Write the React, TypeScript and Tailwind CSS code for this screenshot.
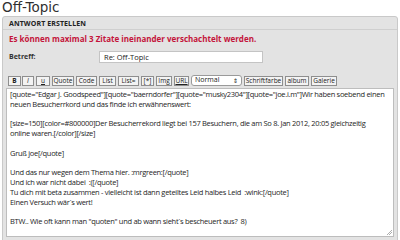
import React from "react";

const lines: string[] = [
  '[quote="Edgar J. Goodspeed"][quote="baerndorfer"][quote="musky2304"][quote="joe.i.m"]Wir haben soebend einen',
  "neuen Besucherrkord und das finde ich erwähnenswert:",
  "",
  "[size=150][color=#800000]Der Besucherrekord liegt bei 157 Besuchern, die am So 8. Jan 2012, 20:05 gleichzeitig",
  "online waren.[/color][/size]",
  "",
  "Gruß joe[/quote]",
  "",
  "Und das nur wegen dem Thema hier. :mrgreen:[/quote]",
  "Und ich war nicht dabei  :([/quote]",
  "Tu dich mit beta zusammen - vielleicht ist dann geteiltes Leid halbes Leid  :wink:[/quote]",
  "Einen Versuch wär´s wert!",
  "",
  "BTW.. Wie oft kann man \"quoten\" und ab wann sieht´s bescheuert aus?  8)",
];

function Btn({ children, className = "" }: { children: React.ReactNode; className?: string }) {
  return (
    <div
      className={
        "h-[10px] border border-[#8e8e8e] bg-[#f3f3f3] text-[6.5px] leading-[8px] text-[#222] flex items-center justify-center shrink-0 " +
        className
      }
    >
      {children}
    </div>
  );
}

export default function App() {
  return (
    <div className="w-[400px] h-[240px] bg-white overflow-hidden font-['Open_Sans',sans-serif] text-[#333]">
      <div className="h-[15px] pl-[2px] mt-[-1px] text-[13.5px] leading-[16px] font-['DejaVu_Sans',sans-serif] text-[#303030]">
        Off-Topic
      </div>
      <div className="ml-[2px] mr-[2px] mt-[2px] h-[240px] border border-[#c9c9c9] bg-[#e3e3e3] rounded-t-[3px]">
        <div className="h-[13px] pl-[6px] pt-[2px] border-b border-[#cfcfcf] text-[7px] leading-[9px] font-bold text-[#222] tracking-[0.1px]">
          ANTWORT ERSTELLEN
        </div>
        <div className="pl-[6px] pt-[3px] h-[16px] text-[8px] leading-[11px] font-bold text-[#c4143a]">
          Es können maximal 3 Zitate ineinander verschachtelt werden.
        </div>
        <div className="flex items-center h-[16px] mt-[3px]">
          <div className="w-[96px] pl-[6px] text-[7px] font-bold text-[#333]">Betreff:</div>
          <div className="w-[164px] h-[12px] bg-white border border-[#c4c4c4] pl-[4px] text-[7.5px] leading-[10px] text-[#222] flex items-center">
            Re: Off-Topic
          </div>
        </div>
        <div className="flex items-center pl-[5px] mt-[10px] h-[11px]">
          <Btn className="w-[13px] font-bold">B</Btn>
          <Btn className="w-[12px] ml-[1px] italic">I</Btn>
          <Btn className="w-[14px] ml-[2px] underline">u</Btn>
          <Btn className="w-[22px] ml-[2px]">Quote</Btn>
          <Btn className="w-[21px] ml-[2px]">Code</Btn>
          <Btn className="w-[17px] ml-[2px]">List</Btn>
          <Btn className="w-[21px] ml-[2px]">List=</Btn>
          <Btn className="w-[13px] ml-[2px]">[*]</Btn>
          <Btn className="w-[16px] ml-[2px]">Img</Btn>
          <Btn className="w-[15px] ml-[2px] underline">URL</Btn>
          <div className="w-[51px] ml-[2px] h-[11px] border border-[#9a9a9a] rounded-[3px] bg-white flex items-center justify-between px-[3px] text-[7px] text-[#222] shrink-0">
            <span>Normal</span>
            <span className="text-[6px] leading-[6px]">⇕</span>
          </div>
          <Btn className="w-[39px] ml-[2px]">Schriftfarbe</Btn>
          <Btn className="w-[24px] ml-[2px]">album</Btn>
          <Btn className="w-[26px] ml-[2px]">Galerie</Btn>
        </div>
        <div className="mx-[3px] mt-[2px] h-[149px] bg-white border border-[#bdbdbd] pl-[3px] pt-[1px] text-[7.5px] leading-[9.8px] tracking-[-0.3px] text-[#1e1e1e] relative">
          {lines.map((l, i) => (
            <div key={i} className="whitespace-pre h-[9.8px]">
              {l}
            </div>
          ))}
          <svg className="absolute right-[1px] bottom-[1px]" width="6" height="6" viewBox="0 0 6 6">
            <path d="M1 6 L6 1 M3 6 L6 3" stroke="#999" strokeWidth="0.8" />
          </svg>
        </div>
      </div>
    </div>
  );
}
